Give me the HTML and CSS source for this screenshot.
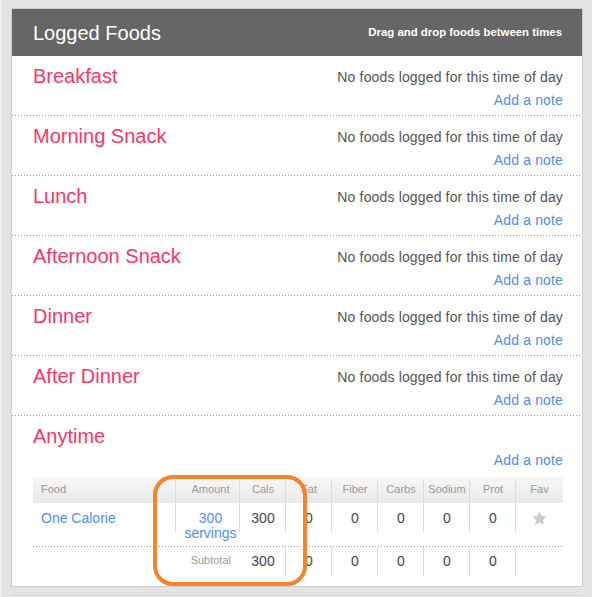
FILE: index.html
```html
<!DOCTYPE html>
<html>
<head>
<meta charset="utf-8">
<link rel="stylesheet" href="styles.css">
</head>
<body>
<div class="panel">
  <div class="panel-head">
    <h1 class="panel-title">Logged Foods</h1>
    <span class="panel-hint">Drag and drop foods between times</span>
  </div>

  <div class="meal sep">
    <div class="meal-head">
      <div class="meal-title">Breakfast</div>
      <div class="meal-side"><div>No foods logged for this time of day</div><a class="link note">Add a note</a></div>
    </div>
  </div>
  <div class="meal sep">
    <div class="meal-head">
      <div class="meal-title">Morning Snack</div>
      <div class="meal-side"><div>No foods logged for this time of day</div><a class="link note">Add a note</a></div>
    </div>
  </div>
  <div class="meal sep">
    <div class="meal-head">
      <div class="meal-title">Lunch</div>
      <div class="meal-side"><div>No foods logged for this time of day</div><a class="link note">Add a note</a></div>
    </div>
  </div>
  <div class="meal sep">
    <div class="meal-head">
      <div class="meal-title">Afternoon Snack</div>
      <div class="meal-side"><div>No foods logged for this time of day</div><a class="link note">Add a note</a></div>
    </div>
  </div>
  <div class="meal sep">
    <div class="meal-head">
      <div class="meal-title">Dinner</div>
      <div class="meal-side"><div>No foods logged for this time of day</div><a class="link note">Add a note</a></div>
    </div>
  </div>
  <div class="meal sep">
    <div class="meal-head">
      <div class="meal-title">After Dinner</div>
      <div class="meal-side"><div>No foods logged for this time of day</div><a class="link note">Add a note</a></div>
    </div>
  </div>
  <div class="meal last">
    <div class="meal-head">
      <div class="meal-title">Anytime</div>
      <div class="meal-side"><div>&nbsp;</div><a class="link note">Add a note</a></div>
    </div>
    <div class="foods">
      <div class="row thead">
        <div class="c left">Food</div>
        <div class="c amt">Amount</div>
        <div class="c">Cals</div>
        <div class="c">Fat</div>
        <div class="c">Fiber</div>
        <div class="c">Carbs</div>
        <div class="c">Sodium</div>
        <div class="c">Prot</div>
        <div class="c nob">Fav</div>
      </div>
      <div class="row item">
        <div class="c left"><a class="link">One Calorie</a></div>
        <div class="c amt"><a class="link">300<br>servings</a></div>
        <div class="c">300</div>
        <div class="c">0</div>
        <div class="c">0</div>
        <div class="c">0</div>
        <div class="c">0</div>
        <div class="c">0</div>
        <div class="c nob"><svg class="star" viewBox="0 0 24 24" width="17" height="17"><path d="M12 2l3.09 6.26L22 9.27l-5 4.87 1.18 6.88L12 17.77l-6.18 3.25L7 14.14 2 9.27l6.91-1.01L12 2z"/></svg></div>
      </div>
      <div class="row subtotal">
        <div class="c label">Subtotal</div>
        <div class="c">300</div>
        <div class="c">0</div>
        <div class="c">0</div>
        <div class="c">0</div>
        <div class="c">0</div>
        <div class="c">0</div>
        <div class="c nob"></div>
      </div>
    </div>
  </div>
</div>
<div class="next-panel"></div>
<div class="highlight"></div>
</body>
</html>
```

FILE: styles.css
```css
html {
  background: #e3e3e3;
}
body {
  margin: 0;
  padding: 8px 9px 0 9px;
  border-left: 2px solid #efefef;
  font-family: "Liberation Sans", Arial, sans-serif;
  height: 597px;
  box-sizing: border-box;
  overflow: hidden;
}
.panel {
  border: 1px solid #cdcdcd;
  background: #fff;
}
.panel-head {
  height: 47px;
  background: #666666;
  color: #fff;
  display: flex;
  align-items: center;
  justify-content: space-between;
  padding: 0 20px 0 21px;
}
.panel-title {
  margin: 0;
  font-size: 20px;
  line-height: 24px;
  font-weight: normal;
}
.panel-hint {
  font-size: 11.4px;
  line-height: 14px;
  font-weight: bold;
  margin-bottom: 1px;
}
.meal {
  padding: 8px 19px 5px 21px;
}
.meal.sep {
  background-image: linear-gradient(to right, #9a9a9a 1px, transparent 1px);
  background-size: 3px 1px;
  background-repeat: repeat-x;
  background-position: left bottom;
}
.meal.last {
  padding-bottom: 0;
}
.meal-head {
  display: flex;
  justify-content: space-between;
  align-items: flex-start;
}
.meal-title {
  font-size: 20px;
  line-height: 24px;
  color: #ff3366;
}
.meal-side {
  padding-top: 2px;
  font-size: 14px;
  line-height: 22px;
  color: #555;
  text-align: right;
  letter-spacing: 0.15px;
}
.link {
  color: #4f8ef5;
  text-decoration: none;
}
.note {
  display: block;
  margin-top: 1px;
}
.foods {
  margin-top: 6px;
}
.row {
  display: grid;
  grid-template-columns: 143px 64px 46px 46px 46px 46px 46px 46px 47px;
}
.c {
  text-align: center;
  background-image: linear-gradient(#dcdcdc, #dcdcdc);
  background-repeat: no-repeat;
  background-position: right top;
  background-size: 1px 29px;
}
.c.nob {
  background-image: none;
}
.c.left {
  text-align: left;
  padding-left: 8px;
}
.c.amt {
  padding-left: 5px;
}
.thead {
  height: 26px;
  background: linear-gradient(#f7f7f7, #e9e9e9);
}
.thead .c {
  font-size: 11px;
  line-height: 25px;
  color: #999;
  background-position: right 3px;
  background-size: 1px 23px;
}
.item {
  height: 43px;
  font-size: 14px;
  line-height: 15px;
  color: #444;
  background-image: linear-gradient(to right, #9a9a9a 1px, transparent 1px);
  background-size: 3px 1px;
  background-repeat: repeat-x;
  background-position: left bottom;
  padding-bottom: 1px;
}
.item .c {
  padding-top: 8px;
}
.star {
  fill: #cccccc;
  display: block;
  margin: -1px auto 0;
}
.subtotal {
  height: 39px;
  font-size: 14px;
  line-height: 15px;
  color: #444;
}
.subtotal .c {
  padding-top: 7px;
}
.subtotal .c.label {
  grid-column: span 2;
  text-align: right;
  padding-right: 9px;
  padding-top: 6px;
  font-size: 11px;
  color: #999;
  background-image: none;
}
.next-panel {
  margin-top: 8px;
  height: 10px;
  border-top: 1px solid #d4d4d4;
  background: #ececec;
}
.highlight {
  position: absolute;
  left: 153px;
  top: 475px;
  width: 154px;
  height: 111px;
  box-sizing: border-box;
  border: 4px solid #f7822a;
  border-radius: 20px;
}
```
